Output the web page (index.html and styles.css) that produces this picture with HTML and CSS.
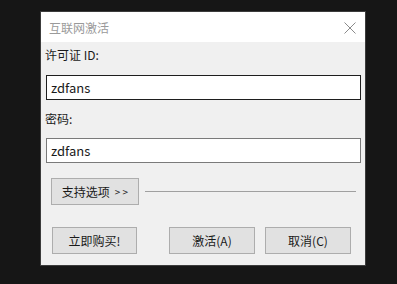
FILE: index.html
```html
<!DOCTYPE html>
<html>
<head>
  <link rel="stylesheet" href="styles.css">
</head>
<body>
  <div class="dialog">
    <div class="titlebar">
      <span class="title">互联网激活</span>
      <svg class="close" width="12" height="12" viewBox="0 0 12 12">
        <path d="M0.5 0.5 L11.5 11.5 M11.5 0.5 L0.5 11.5" stroke="#8a8a8a" stroke-width="1" fill="none"/>
      </svg>
    </div>
    <div class="content">
      <div class="label label-first">许可证 ID:</div>
      <div class="field field-active">zdfans</div>
      <div class="label">密码:</div>
      <div class="field">zdfans</div>
      <div class="options-row">
        <div class="btn btn-options">支持选项 <span class="arrows">&gt; &gt;</span></div>
        <div class="rule"></div>
      </div>
      <div class="actions">
        <div class="btn btn-buy">立即购买!</div>
        <div class="btn btn-activate">激活(A)</div>
        <div class="btn btn-cancel">取消(C)</div>
      </div>
    </div>
  </div>
</body>
</html>
```

FILE: styles.css
```css
body {
  margin: 0;
  background-color: #161616;
  font-family: "Noto Sans CJK SC", "Noto Sans", sans-serif;
  font-size: 12px;
  color: #1a1a1a;
}

.dialog {
  margin: 11px 0 0 40px;
  width: 324px;
  border: 1px solid #3c3c3c;
  background-color: #f0f0f0;
}

.titlebar {
  height: 30px;
  background-color: #fff;
  display: flex;
  align-items: center;
  justify-content: space-between;
  padding: 0 9px 0 8px;
}

.title {
  color: #9a9a9a;
  font-size: 12px;
}

.close {
  margin-top: 2px;
}

.content {
  display: flex;
  flex-direction: column;
  padding: 0 0 11px 0;
}

.label {
  height: 16px;
  line-height: 16px;
  margin: 11px 0 0 4px;
}

.label-first {
  margin-top: 5px;
}

.field {
  margin: 11px 0 0 5px;
  width: 305px;
  height: 23px;
  line-height: 23px;
  padding: 0 4px;
  border: 1px solid #7a7a7a;
  background-color: #fff;
  font-size: 13px;
}

.field-active {
  margin-top: 12px;
  border-color: #1e1e1e;
}

.btn {
  height: 25px;
  border: 1px solid #adadad;
  background-color: #e1e1e1;
  display: flex;
  align-items: center;
  justify-content: center;
}

.options-row {
  display: flex;
  align-items: center;
  margin: 15px 0 0 10px;
}

.btn-options {
  width: 86px;
}

.arrows {
  font-size: 10px;
  margin-left: 5px;
}

.rule {
  width: 211px;
  height: 1px;
  background-color: #a0a0a0;
  margin-left: 6px;
}

.actions {
  display: flex;
  margin: 22px 0 0 11px;
}

.btn-buy {
  width: 83px;
}

.btn-activate {
  width: 84px;
  margin-left: 32px;
}

.btn-cancel {
  width: 84px;
  margin-left: 10px;
}
```
